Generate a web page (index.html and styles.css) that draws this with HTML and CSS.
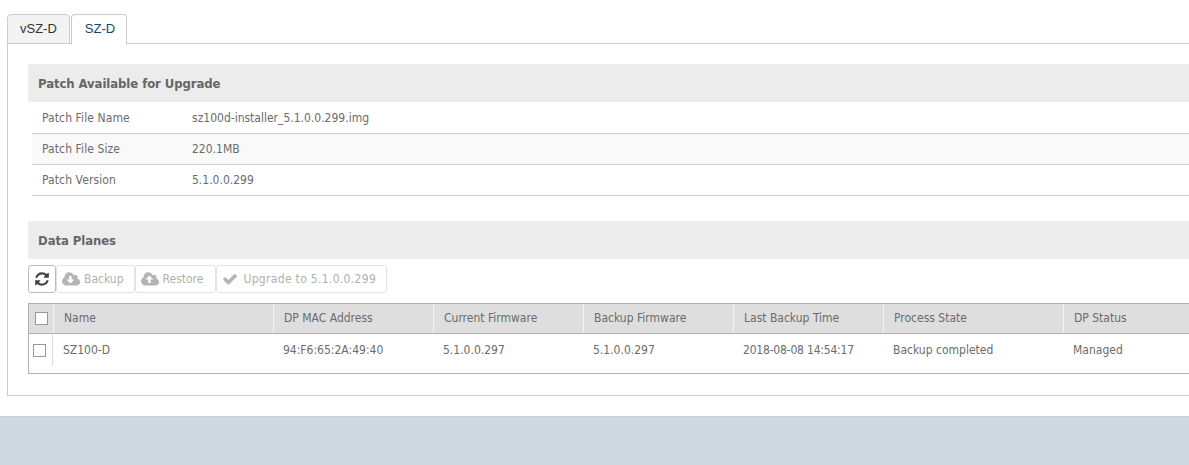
FILE: index.html
```html
<!DOCTYPE html>
<html lang="en">
<head>
<meta charset="utf-8">
<title>Data Plane Patch</title>
<link rel="stylesheet" href="styles.css">
</head>
<body>
<main class="page">
  <div class="tabs">
    <div class="tab">vSZ-D</div>
    <div class="tab active">SZ-D</div>
  </div>
  <section class="panel">
    <h2 class="section-head">Patch Available for Upgrade</h2>
    <div class="info">
      <div class="info-row first"><span class="info-label">Patch File Name</span><span>sz100d-installer_5.1.0.0.299.img</span></div>
      <div class="info-row alt"><span class="info-label">Patch File Size</span><span>220.1MB</span></div>
      <div class="info-row"><span class="info-label">Patch Version</span><span>5.1.0.0.299</span></div>
    </div>
    <h2 class="section-head second">Data Planes</h2>
    <div class="toolbar">
      <button class="btn refresh" type="button" aria-label="Refresh">
        <svg width="16" height="16" viewBox="0 0 1792 1792"><path d="M1639 1056q0 5-1 7-64 268-268 434.5t-478 166.5q-146 0-282.5-55t-243.5-157l-129 129q-19 19-45 19t-45-19-19-45v-448q0-26 19-45t45-19h448q26 0 45 19t19 45-19 45l-137 137q71 66 161 102t187 36q134 0 250-65t186-179q11-17 53-117 8-23 30-23h192q13 0 22.5 9.5t9.5 22.5zm25-800v448q0 26-19 45t-45 19h-448q-26 0-45-19t-19-45 19-45l138-138q-148-137-349-137-134 0-250 65t-186 179q-11 17-53 117-8 23-30 23h-199q-13 0-22.5-9.5t-9.5-22.5v-7q65-268 270-434.5t480-166.5q146 0 284 55.5t245 156.5l130-129q19-19 45-19t45 19 19 45z" fill="#444"/></svg>
      </button>
      <button class="btn" type="button">
        <svg width="18" height="17" viewBox="0 0 1920 1792"><path d="M1280 928q0-14-9-23t-23-9h-224v-352q0-13-9.5-22.5t-22.5-9.5h-192q-13 0-22.5 9.5t-9.5 22.5v352h-224q-14 0-23 9t-9 23q0 12 10 24l352 352q9 9 23 9t23-9l351-351q11-13 11-25zm640 224q0 159-112.5 271.5t-271.5 112.5h-1088q-185 0-316.5-131.5t-131.5-316.5q0-130 70-240t188-165q-2-30-2-43 0-212 150-362t362-150q156 0 285.5 87t188.5 231q71-62 166-62 106 0 181 75t75 181q0 76-41 138 130 31 213.5 135.5t83.5 238.5z" fill="#b4b4b4"/></svg>
        Backup
      </button>
      <button class="btn restore" type="button">
        <svg width="18" height="17" viewBox="0 0 1920 1792"><path d="M1280 864q0-14-9-23l-352-352q-9-9-23-9t-23 9l-351 351q-11 13-11 25 0 14 9 23t23 9h224v352q0 13 9.5 22.5t22.5 9.5h192q13 0 22.5-9.5t9.5-22.5v-352h224q13 0 22.5-9.5t9.5-22.5zm640 288q0 159-112.5 271.5t-271.5 112.5h-1088q-185 0-316.5-131.5t-131.5-316.5q0-130 70-240t188-165q-2-30-2-43 0-212 150-362t362-150q156 0 285.5 87t188.5 231q71-62 166-62 106 0 181 75t75 181q0 76-41 138 130 31 213.5 135.5t83.5 238.5z" fill="#b4b4b4"/></svg>
        Restore
      </button>
      <button class="btn upgrade" type="button">
        <svg width="16" height="16" viewBox="0 0 1792 1792"><path d="M1671 566q0 40-28 68l-724 724-136 136q-28 28-68 28t-68-28l-136-136-362-362q-28-28-28-68t28-68l136-136q28-28 68-28t68 28l294 295 656-657q28-28 68-28t68 28l136 136q28 28 28 68z" fill="#b4b4b4"/></svg>
        Upgrade to 5.1.0.0.299
      </button>
    </div>
    <div class="grid">
      <div class="grid-row head">
        <div class="check-cell"><span class="check"></span></div>
        <div class="c-name">Name</div>
        <div class="c-mac">DP MAC Address</div>
        <div class="c-fw">Current Firmware</div>
        <div class="c-fw">Backup Firmware</div>
        <div class="c-fw">Last Backup Time</div>
        <div class="c-state">Process State</div>
        <div class="c-status">DP Status</div>
      </div>
      <div class="grid-row body">
        <div class="check-cell"><span class="check"></span></div>
        <div class="c-name">SZ100-D</div>
        <div class="c-mac">94:F6:65:2A:49:40</div>
        <div class="c-fw">5.1.0.0.297</div>
        <div class="c-fw">5.1.0.0.297</div>
        <div class="c-fw c-date">2018-08-08 14:54:17</div>
        <div class="c-state">Backup completed</div>
        <div class="c-status">Managed</div>
      </div>
    </div>
  </section>
</main>
<footer class="band"></footer>
</body>
</html>
```
FILE: styles.css
```css
html, body {
  margin: 0;
  height: 465px;
  overflow: hidden;
  background: #fff;
}
body {
  font-family: "DejaVu Sans Condensed", "DejaVu Sans", sans-serif;
  font-stretch: condensed;
  font-size: 12px;
  color: #6b6b6b;
  display: flex;
  flex-direction: column;
}
.page {
  height: 416px;
  padding: 14px 0 0 7px;
  box-sizing: border-box;
  width: 1260px;
}
.tabs {
  display: flex;
  height: 30px;
  gap: 1px;
  margin-bottom: -1px;
  position: relative;
}
.tab {
  font-family: "Liberation Sans", sans-serif;
  font-size: 13px;
  color: #333;
  background: #f3f3f3;
  border: 1px solid #ccc;
  border-radius: 4px 4px 0 0;
  padding: 0 12px;
  line-height: 28px;
  height: 28px;
}
.tab.active {
  height: 29px;
  background: #fff;
  color: #0f4a66;
  border-bottom-color: #fff;
  padding: 0 11px 0 13px;
}
.panel {
  border: 1px solid #ccc;
  height: 353px;
  box-sizing: border-box;
  padding: 20px 0 0 20px;
}
.section-head {
  margin: 0;
  height: 38px;
  line-height: 39px;
  padding-left: 10px;
  background: #ececec;
  font-size: 13px;
  font-weight: bold;
  letter-spacing: -0.08px;
  color: #666;
}
.section-head.second {
  margin-top: 25px;
}
.info {
  margin-left: 4px;
}
.info-row {
  display: flex;
  height: 31px;
  line-height: 31px;
  box-sizing: border-box;
  border-bottom: 1px solid #ccc;
  padding-left: 10px;
}
.info-row.first {
  height: 32px;
  line-height: 32px;
}
.info-row.alt {
  background: #f9f9f9;
}
.info-label {
  width: 150px;
  letter-spacing: 0.1px;
}
.toolbar {
  display: flex;
  margin-top: 6px;
}
.btn {
  display: flex;
  align-items: center;
  gap: 4px;
  height: 28px;
  padding: 0 10px 0 5px;
  background: #fff;
  border: 1px solid #e2e2e2;
  border-radius: 3px;
  font: inherit;
  color: #b0b0b0;
}
.btn.refresh {
  width: 28px;
  padding: 0;
  justify-content: center;
  border-color: #bbb;
}
.btn.restore {
  padding-right: 12px;
}
.btn.upgrade {
  letter-spacing: 0.32px;
  gap: 5px;
}
.grid {
  margin-top: 10px;
  border: 1px solid #b0b0b0;
  border-right: 0;
  height: 71px;
  box-sizing: border-box;
}
.grid-row {
  display: grid;
  grid-template-columns: 24px 220px 160px 150px 150px 150px 180px 200px;
}
.grid-row.head {
  height: 30px;
  background: #dedede;
  border-bottom: 1px solid #b0b0b0;
  box-sizing: border-box;
  line-height: 29px;
}
.grid-row.head > div {
  border-left: 1px solid #f4f4f4;
  padding-left: 10px;
}
.grid-row.head > .check-cell {
  border-left: 0;
  padding: 0;
}
.grid-row.body {
  height: 39px;
  line-height: 32px;
}
.grid-row.body > div {
  padding-left: 10px;
}
.grid-row.body > .check-cell {
  padding: 0 2px 0 0;
  border-right: 1px solid #ddd;
  height: 32px;
}
.grid-row.body > .c-date {
  letter-spacing: -0.2px;
}
.check-cell {
  display: flex;
  align-items: center;
  justify-content: center;
}
.check {
  width: 11px;
  height: 11px;
  background: #fff;
  border: 1px solid #999;
}
.band {
  flex: 1;
  background: #d0d8e2;
  border-top: 1px solid #c8d0da;
}
```
